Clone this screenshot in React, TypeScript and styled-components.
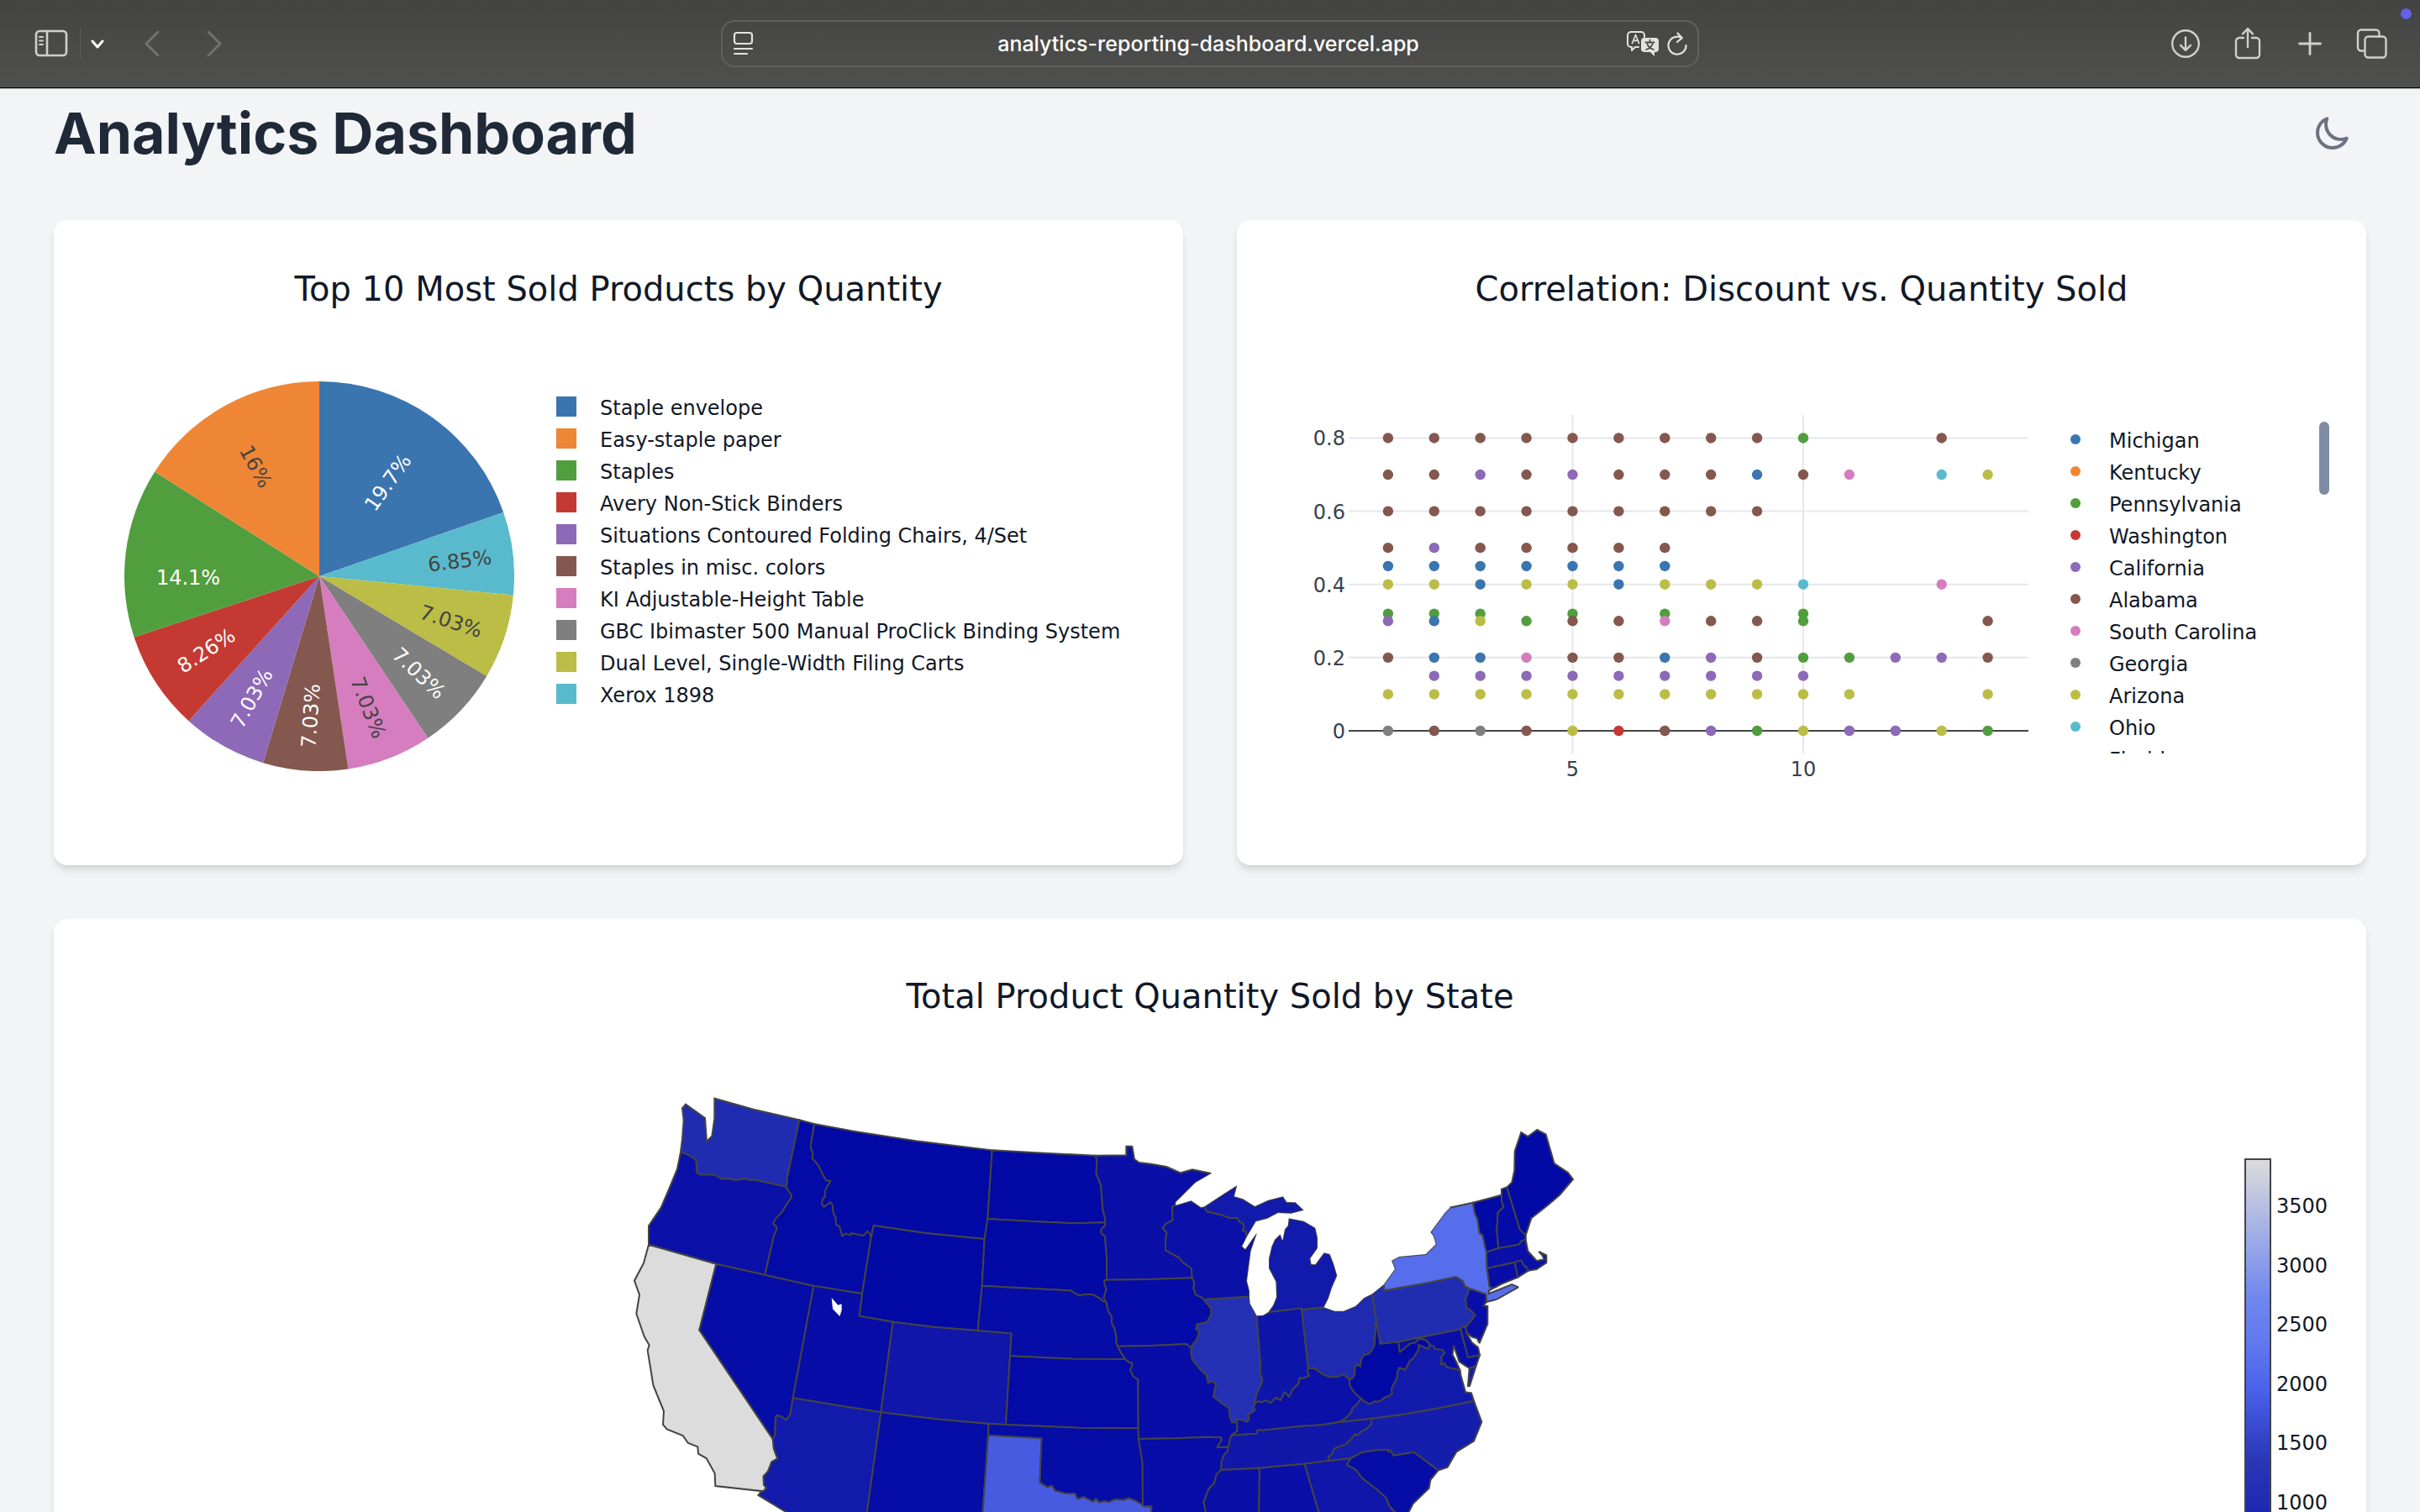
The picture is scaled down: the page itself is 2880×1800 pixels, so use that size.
import React from "react";
import styled, { createGlobalStyle } from "styled-components";

const CHART_FONT = '"DejaVu Sans", Verdana, sans-serif';
const UI_FONT = 'Inter, "Liberation Sans", sans-serif';

const COLORS = {
  blue: "#3b75af",
  orange: "#ef8636",
  green: "#519e3e",
  red: "#c43a32",
  purple: "#8d69b8",
  brown: "#84584e",
  pink: "#d57dbe",
  gray: "#7f7f7f",
  olive: "#bbbd46",
  cyan: "#58bacc",
};

const GlobalStyle = createGlobalStyle`
  *, *::before, *::after { box-sizing: border-box; }
  body { margin: 0; background: #f3f4f6; font-family: ${UI_FONT}; }
  h1, h2, ul { margin: 0; padding: 0; }
  ul { list-style: none; }
  svg { display: block; flex: none; }
`;

/* ---------- Browser window ---------- */

const Window = styled.div`
  display: flex;
  flex-direction: column;
  height: 100vh;
  overflow: hidden;
  background: #f3f4f6;
`;

const Toolbar = styled.div`
  position: relative;
  display: grid;
  grid-template-columns: 1fr minmax(0, 1164px) 1fr;
  align-items: center;
  flex: none;
  height: 106px;
  padding-bottom: 2px;
  background: linear-gradient(#434341, #50504e);
  border-bottom: 1px solid #b4b4b4;
  box-shadow: inset 0 -1px 0 #000;
`;

const ToolGroup = styled.div<{ $end?: boolean }>`
  display: flex;
  align-items: center;
  justify-content: ${(p) => (p.$end ? "flex-end" : "flex-start")};
  gap: ${(p) => (p.$end ? "32px" : "0")};
  padding: 0 36px 0 32px;
`;

const IconButton = styled.button<{ $w?: number; $color?: string }>`
  display: flex;
  align-items: center;
  justify-content: center;
  width: ${(p) => p.$w ?? 42}px;
  height: 48px;
  padding: 0;
  border: 0;
  background: none;
  color: ${(p) => p.$color ?? "#cfcfcd"};
  cursor: pointer;
`;

const Divider = styled.span`
  width: 1px;
  height: 36px;
  margin: 0 8px 0 5px;
  background: #60605e;
`;

const NavButtons = styled.div`
  display: flex;
  gap: 32px;
  margin-left: 32px;
`;

const AddressBar = styled.label`
  display: flex;
  align-items: center;
  height: 56px;
  padding: 0 4px 0 12px;
  border: 2px solid #5f5f5d;
  border-radius: 16px;
  color: #e2e2e0;
`;

const AddressInput = styled.input`
  flex: 1;
  min-width: 0;
  margin-left: 44px;
  padding: 0;
  border: 0;
  outline: 0;
  background: none;
  color: #fff;
  font: 500 25px/32px ${UI_FONT};
  text-align: center;
`;

const RecordingDot = styled.span`
  position: absolute;
  top: 10px;
  right: 10px;
  width: 13px;
  height: 13px;
  border-radius: 50%;
  background: #6462e8;
`;

/* ---------- Page ---------- */

const Page = styled.main`
  display: flex;
  flex-direction: column;
  gap: 64px;
  flex: 1;
  min-height: 0;
  overflow: hidden;
  padding: 12px 64px 0;
`;

const PageHeader = styled.header`
  display: flex;
  flex: none;
  align-items: center;
  justify-content: space-between;
`;

const PageTitle = styled.h1`
  color: #1f2937;
  font: 700 68px/80px ${UI_FONT};
`;

const ThemeButton = styled.button`
  display: flex;
  padding: 16px;
  border: 0;
  background: none;
  color: #6b7280;
  cursor: pointer;
`;

const CardRow = styled.div`
  display: grid;
  flex: none;
  grid-template-columns: 1fr 1fr;
  gap: 64px;
`;

const Card = styled.section<{ $tall?: boolean }>`
  flex: none;
  min-height: ${(p) => (p.$tall ? 1000 : 768)}px;
  padding: ${(p) => (p.$tall ? 68 : 58)}px 32px 32px;
  border-radius: 16px;
  background: #fff;
  box-shadow: 0 8px 12px -2px rgba(0, 0, 0, 0.1), 0 4px 8px -4px rgba(0, 0, 0, 0.1);
`;

const CardTitle = styled.h2`
  color: #111827;
  font: 400 40px/48px ${CHART_FONT};
  text-align: center;
`;

const PieBody = styled.div`
  display: flex;
  gap: 50px;
  padding: 86px 0 0 52px;
`;

const ScatterBody = styled.div`
  display: flex;
  align-items: flex-start;
  gap: 40px;
  padding: 112px 12px 0 40px;
`;

const MapBody = styled.div`
  display: flex;
  align-items: flex-start;
  padding-top: 70px;
`;

const MapArea = styled.div`
  display: flex;
  flex: 1;
  justify-content: center;
`;

const ColorBarArea = styled.div`
  display: flex;
  justify-content: flex-end;
  width: 260px;
  padding-top: 99px;
`;

const Legend = styled.ul<{ $scroll?: boolean }>`
  flex: 1;
  min-width: 0;
  height: ${(p) => (p.$scroll ? "417px" : "auto")};
  padding-top: ${(p) => (p.$scroll ? 24 : 11)}px;
  overflow: hidden;
  color: #111827;
  font: 400 24px/32px ${CHART_FONT};
`;

const LegendItem = styled.li<{ $gap: number }>`
  display: flex;
  align-items: center;
  gap: ${(p) => p.$gap}px;
  height: 38px;
  white-space: nowrap;
`;

const LegendName = styled.span`
  padding-top: 3px;
`;

const Swatch = styled.span<{ $color: string; $round?: boolean }>`
  flex: none;
  width: ${(p) => (p.$round ? 12 : 24)}px;
  height: ${(p) => (p.$round ? 12 : 24)}px;
  border-radius: ${(p) => (p.$round ? "50%" : "0")};
  background: ${(p) => p.$color};
`;

const ScrollThumb = styled.div`
  flex: none;
  width: 12px;
  height: 87px;
  margin-top: 22px;
  border-radius: 6px;
  background: #808ba4;
`;

const ChartText = styled.text<{ $fill: string }>`
  font: 400 24px ${CHART_FONT};
  fill: ${(p) => p.$fill};
`;

/* ---------- Toolbar icons ---------- */

const stroke = {
  fill: "none",
  stroke: "currentColor",
  strokeLinecap: "round" as const,
  strokeLinejoin: "round" as const,
};

const SidebarIcon = () => (
  <svg width="40" height="34" viewBox="0 0 40 34" {...stroke} strokeWidth="2.6">
    <rect x="2" y="2" width="36" height="29" rx="4" />
    <path d="M15 2v29" />
    <path d="M6 9h4M6 13.5h4M6 18h4" strokeWidth="2" />
  </svg>
);

const ChevronIcon = ({ d, w, h, sw }: { d: string; w: number; h: number; sw: number }) => (
  <svg width={w} height={h} viewBox={`0 0 ${w} ${h}`} {...stroke} strokeWidth={sw}>
    <path d={d} />
  </svg>
);

const ReaderIcon = () => (
  <svg width="26" height="30" viewBox="0 0 26 30" {...stroke} strokeWidth="2.2">
    <rect x="2" y="2" width="21" height="13" rx="3" />
    <path d="M2 21h21M2 27h15" />
  </svg>
);

const TranslateIcon = () => (
  <svg width="40" height="32" viewBox="0 0 40 32" {...stroke} strokeWidth="2">
    <path d="M15 20h-4l-4 4v-4H6a4 4 0 0 1-4-4V6a4 4 0 0 1 4-4h12a4 4 0 0 1 4 4v2" />
    <path d="M7.5 15.5 11.5 5.5l4 10M9 12.3h5" strokeWidth="1.7" />
    <path
      d="M22 9h13a4 4 0 0 1 4 4v9a4 4 0 0 1-4 4h-1v5l-5-5h-7a4 4 0 0 1-4-4v-9a4 4 0 0 1 4-4z"
      fill="currentColor"
      stroke="none"
    />
    <path
      d="M28.5 11.500v2.500M23.500 14.500h10M25.500 16.500c1 3 4 5.500 7.500 6.500M31.500 16.500c-1 3-4 5.500-7.500 6.500"
      stroke="#494946"
      strokeWidth="1.8"
    />
  </svg>
);

const ReloadIcon = () => (
  <svg width="26" height="30" viewBox="0 0 26 30" {...stroke} strokeWidth="2.2">
    <path d="M18.5 8.2A10.500 10.500 0 1 0 23.500 17" />
    <path d="M13.500 2.500 18.700 8.200 13 13" />
  </svg>
);

const DownloadIcon = () => (
  <svg width="36" height="36" viewBox="0 0 36 36" {...stroke} strokeWidth="2.4">
    <circle cx="18" cy="18" r="15.8" />
    <path d="M18 10.500v15M12 19.800l6 6 6-6" />
  </svg>
);

const ShareIcon = () => (
  <svg width="32" height="40" viewBox="0 0 32 40" {...stroke} strokeWidth="2.4">
    <path d="M11 13H6a4 4 0 0 0-4 4v16a4 4 0 0 0 4 4h20a4 4 0 0 0 4-4V17a4 4 0 0 0-4-4h-5" />
    <path d="M16 24V2.500M10 8.300 16 2.200l6 6.100" />
  </svg>
);

const PlusIcon = () => (
  <svg width="30" height="30" viewBox="0 0 30 30" {...stroke} strokeWidth="2.8">
    <path d="M15 2.500v25M2.500 15h25" />
  </svg>
);

const TabsIcon = () => (
  <svg width="38" height="38" viewBox="0 0 38 38" {...stroke} strokeWidth="2.4">
    <rect x="10.5" y="10.5" width="25" height="25" rx="4" />
    <path d="M9 27.500H6a4 4 0 0 1-4-4V6.500a4 4 0 0 1 4-4h17.500a4 4 0 0 1 4 4V9" />
  </svg>
);

const MoonIcon = () => (
  <svg width="48" height="48" viewBox="0 0 24 24" {...stroke} strokeWidth="2">
    <path d="M20.354 15.354A9 9 0 0 1 8.646 3.646 9.003 9.003 0 0 0 12 21a9.003 9.003 0 0 0 8.354-5.646z" />
  </svg>
);

/* ---------- Pie chart ---------- */

const PRODUCTS: [string, string][] = [
  ["Staple envelope", COLORS.blue],
  ["Easy-staple paper", COLORS.orange],
  ["Staples", COLORS.green],
  ["Avery Non-Stick Binders", COLORS.red],
  ["Situations Contoured Folding Chairs, 4/Set", COLORS.purple],
  ["Staples in misc. colors", COLORS.brown],
  ["KI Adjustable-Height Table", COLORS.pink],
  ["GBC Ibimaster 500 Manual ProClick Binding System", COLORS.gray],
  ["Dual Level, Single-Width Filing Carts", COLORS.olive],
  ["Xerox 1898", COLORS.cyan],
];

// Quantity, slice colour, label, label centre from the middle of the pie, turn, label colour
type Slice = [number, string, string, number, number, number, string];
const SLICES: Slice[] = [
  [112, COLORS.blue, "19.7%", 81, -112, -54.6, "#fff"],
  [39, COLORS.cyan, "6.85%", 167, -19, -6.8, "#444"],
  [40, COLORS.olive, "7.03%", 157, 53, 18.2, "#444"],
  [40, COLORS.gray, "7.03%", 119, 115, 43.5, "#fff"],
  [40, COLORS.pink, "7.03%", 59, 156, 68.8, "#444"],
  [40, COLORS.brown, "7.03%", -11, 166, -85.9, "#fff"],
  [40, COLORS.purple, "7.03%", -81, 145, -60.6, "#fff"],
  [47, COLORS.red, "8.26%", -135, 88, -33.1, "#fff"],
  [80, COLORS.green, "14.1%", -156, 1, 0, "#fff"],
  [91, COLORS.orange, "16%", -75, -131, 61.2, "#444"],
];
const R = 232;

const Pie = () => {
  const total = SLICES.reduce((s, x) => s + x[0], 0);
  let from = 0;
  const at = (q: number) => {
    const a = (q / total) * Math.PI * 2;
    return `${(Math.sin(a) * R).toFixed(2)},${(-Math.cos(a) * R).toFixed(2)}`;
  };
  return (
    <svg width={2 * R} height={2 * R} viewBox={`${-R} ${-R} ${2 * R} ${2 * R}`} role="img" aria-label="Pie chart">
      {SLICES.map(([q, color], i) => {
        const d = `M0,0L${at(from)}A${R},${R} 0 0 1 ${at(from + q)}Z`;
        from += q;
        return <path key={i} d={d} fill={color} />;
      })}
      {SLICES.map(([, , label, x, y, turn, fill], i) => (
        <ChartText key={i} $fill={fill} textAnchor="middle" transform={`translate(${x} ${y}) rotate(${turn})`} dy="9">
          {label}
        </ChartText>
      ))}
    </svg>
  );
};

/* ---------- Scatter chart ---------- */

const KEY: Record<string, string> = {
  B: COLORS.brown,
  U: COLORS.blue,
  G: COLORS.green,
  P: COLORS.purple,
  O: COLORS.olive,
  C: COLORS.cyan,
  K: COLORS.pink,
  Y: COLORS.gray,
  R: COLORS.red,
};

// One letter for each quantity from 1 on; a dot where there is no sale
const POINTS: [number, string][] = [
  [0.8, "BBBBBBBBBG..B"],
  [0.7, "BBPBPBBBUBK.CO"],
  [0.6, "BBBBBBBBB"],
  [0.5, "BPBBBBB"],
  [0.45, "UUUUUUU"],
  [0.4, "OOUOOUOOOC..K"],
  [0.32, "GGG.G.G..G"],
  [0.3, "PUOGBBKBBG...B"],
  [0.2, "BUUKBBUPBGGPPB"],
  [0.15, ".PPPPPPPPP"],
  [0.1, "OOOOOOOOOOO..O"],
  [0, "YBYBORBPGOPPOG"],
];

const STATES_LEGEND: [string, string][] = [
  ["Michigan", COLORS.blue],
  ["Kentucky", COLORS.orange],
  ["Pennsylvania", COLORS.green],
  ["Washington", COLORS.red],
  ["California", COLORS.purple],
  ["Alabama", COLORS.brown],
  ["South Carolina", COLORS.pink],
  ["Georgia", COLORS.gray],
  ["Arizona", COLORS.olive],
  ["Ohio", COLORS.cyan],
  ["Florida", COLORS.blue],
];

const sx = (v: number) => 53 + v * 54.9;
const sy = (v: number) => 390 - v * 435.7;

const Scatter = () => (
  <svg width="880" height="456" viewBox="0 0 880 456" role="img" aria-label="Scatter chart">
    {[5, 10].map((v) => (
      <g key={v}>
        <path d={`M${sx(v)},14V417`} stroke="#e5e7eb" strokeWidth="2" />
        <ChartText $fill="#374151" x={sx(v)} y="444" textAnchor="middle">
          {v}
        </ChartText>
      </g>
    ))}
    {[0.8, 0.6, 0.4, 0.2, 0].map((v) => (
      <g key={v}>
        <path d={`M61,${sy(v)}H870`} stroke={v ? "#e5e7eb" : "#444"} strokeWidth="2" />
        <ChartText $fill="#374151" x="57" y={sy(v) + 9} textAnchor="end">
          {v}
        </ChartText>
      </g>
    ))}
    {POINTS.map(([y, row]) =>
      row.split("").map((c, i) => (c === "." ? null : <circle key={`${y}-${i}`} cx={sx(i + 1)} cy={sy(y)} r="6.2" fill={KEY[c]} />))
    )}
  </svg>
);

/* ---------- Map ---------- */

// Border lines that neighbouring states share. W, M and E are the west, middle
// and east sheets of the map, each with its own origin.
const ORIGIN: Record<string, [number, number]> = { W: [0, 0], M: [1260, 0], E: [1950, 120] };

const ARCS: Record<string, string> = {
  waCoast: "W 240,275 246,228 251,160 246,118 258,104 327,153 333,237 352,217 361,155 361,83",
  can1: "W 361,83 500,122 664,160",
  waId: "W 664,160 620,370 621,384 617,398",
  waOr: "W 617,398 506,374 485,374 469,369 436,375 411,369 388,371 367,359 350,355 324,356 310,355 297,348 296,308 290,300 268,285 240,275",
  orCoast: "W 126,605 126,538 170,473 198,408 228,335 240,275",
  orId: "W 617,398 625,414 636,428 635,438 622,456 602,489 583,508 573,522 572,532 582,540 583,550 573,573 541,713",
  orNv: "W 541,713 367,674",
  orCa: "W 367,674 126,605",
  caCoast: "W 535,1486 364,1467 362,1422 332,1368 303,1352 301,1327 266,1313 248,1287 191,1264 177,1248 180,1200 142,1107 133,1050 122,983 128,964 110,933 82,852 93,784 75,734 108,671 126,605",
  caNv: "W 367,674 307,910 569,1299",
  caAz: "W 569,1299 573,1335 586,1369 565,1381 552,1415 536,1432 537,1462 546,1474 535,1486",
  nvId: "W 541,713 715,752",
  nvUt: "W 715,752 641,1153",
  nvAz: "W 641,1153 631,1213 616,1231 600,1219 584,1215 579,1223 577,1285 569,1299",
  idMt: "W 717,174 704,256 712,280 710,296 731,321 752,363 760,375 775,378 756,412 755,436 748,440 744,460 752,470 774,453 782,462 786,495 794,509 795,533 808,541 817,574 831,565 846,571 850,564 893,573 907,557 915,565 920,580",
  can2: "W 664,160 717,174",
  idWy: "W 920,580 888,780",
  idUt: "W 888,780 715,752",
  can3: "W 717,174 850,199 1080,235 1352,268",
  mtNd: "W 1352,268 1336,513",
  mtSd: "W 1336,513 1325,585",
  mtWy: "W 1325,585 1120,565 929,537 920,580",
  wySd: "W 1325,585 1316,752",
  wyNe: "W 1316,752 1301,912",
  wyCo: "W 1301,912 1150,900 998,881",
  wyUt: "W 998,881 878,860 888,780",
  utCo: "W 998,881 955,1204",
  utAz: "W 955,1204 641,1153",
  coNe: "W 1301,912 1421,922 1416,1003",
  coKs: "W 1416,1003 1401,1248",
  coOk: "W 1401,1248 1339,1245",
  coNm: "W 1339,1245 1150,1228 955,1204",
  azNm: "W 955,1204 900,1600",
  azSouth: "W 900,1600 690,1600 616,1560 517,1500 527,1488 535,1486",
  nmOk: "W 1339,1245 1338,1286",
  nmTx: "W 1338,1286 1316,1600",
  can4: "M 92,268 250,277 461,287",
  ndMn: "M 461,287 466,302 464,352 480,392 487,478 496,515 496,526",
  ndSd: "M 496,526 390,529 250,523 76,513",
  sdMn: "M 496,526 495,539 485,545 480,558 485,568 495,575 501,650 501,731",
  sdIa: "M 501,731 493,732 493,745 500,763 491,795 500,812",
  sdNe: "M 500,812 485,806 480,799 451,783 417,783 409,787 392,782 373,769 250,763 56,752",
  neIa: "M 500,812 507,843 519,862 520,887 529,903 536,935 535,955 541,968",
  neMo: "M 541,968 545,978 567,1014",
  neKs: "M 567,1014 380,1013 156,1003",
  ksMo: "M 567,1014 583,1026 592,1027 592,1037 585,1052 598,1078 613,1086 614,1261",
  ksOk: "M 614,1261 400,1259 141,1248",
  okMo: "M 614,1261 615,1299",
  okAr: "M 615,1299 629,1385 630,1535",
  okTx: "M 630,1535 602,1519 580,1511 564,1517 530,1515 509,1525 494,1522 473,1526 463,1513 453,1524 418,1506 397,1514 388,1495 355,1494 317,1484 305,1466 289,1471 262,1454 268,1297 78,1286",
  txAr: "M 630,1535 633,1540 661,1539 660,1600",
  arMo: "M 615,1299 750,1297 858,1292 907,1293 912,1302 895,1330 935,1328",
  arTn: "M 935,1328 933,1343 921,1355 911,1380 910,1410",
  arMs: "M 910,1410 893,1425 885,1457 866,1477 847,1525 855,1560 870,1600",
  moTn: "M 935,1328 946,1286",
  moKy: "M 946,1286 968,1270 966,1239",
  moIl: "M 966,1239 948,1240 941,1220 938,1190 905,1166 882,1148 891,1105 880,1093 863,1098 857,1070 830,1045 807,1015 802,990 805,975",
  moIa: "M 805,975 800,973 786,960 660,966 541,968",
  iaIl: "M 805,975 807,963 821,948 831,922 827,910 820,906 824,890 860,881 874,856 875,834 848,801",
  iaWi: "M 848,801 838,792 819,784 811,760 814,741 806,724",
  iaMn: "M 806,724 650,729 501,731",
  mnWi: "M 806,724 804,690 775,670 757,650 738,640 711,625 711,590 716,562 702,547 710,533 737,517 735,470 748,464",
  can5: "M 461,287 571,286 571,254 592,254 600,300 617,312 660,317 715,327 765,349 807,337 875,351",
  mnSup: "M 875,351 818,384 748,454 748,464",
  wiSup: "M 748,464 803,448 838,472 850,469",
  wiMi: "M 850,469 859,487 905,497 940,510 968,509 974,522 988,529 991,540 987,555 998,559 1002,577",
  wiLake: "M 1002,577 985,611 996,621 1030,572 1038,564 1016,628 1002,735 1011,770 1011,791",
  ilWi: "M 1011,791 848,801",
  miUp: "M 850,469 920,423 967,393 957,433 988,442 1030,468 1078,446 1131,433 1144,453 1175,454 1205,482 1160,494 1113,492 1075,512 1034,523 1002,577",
  ilLake: "M 1011,791 1013,815 1037,859",
  ilIn: "M 1037,859 1051,1042 1048,1063 1057,1085 1056,1097 1038,1134 1030,1165 1031,1172",
  ilKy: "M 1031,1172 1026,1187 1030,1197 1006,1213 1010,1229 1003,1238 975,1229 966,1230 966,1239",
  inLake: "M 1037,859 1060,857 1078,846",
  inMi: "M 1078,846 1197,832",
  inOh: "M 1197,832 1221,1047",
  inKy: "M 1221,1047 1218,1055 1224,1073 1203,1083 1190,1082 1187,1100 1165,1123 1153,1148 1136,1132 1122,1161 1105,1152 1087,1170 1068,1161 1053,1168 1040,1165 1031,1172",
  miLow: "M 1078,846 1095,822 1107,793 1105,738 1080,690 1080,655 1090,612 1101,587 1121,568 1129,590 1137,550 1148,538 1151,511 1205,521 1246,545 1254,580 1254,618 1228,655 1232,675 1246,676 1277,634 1298,639 1312,675 1324,716 1305,760 1293,797 1277,829",
  miOh: "M 1277,829 1197,838 1197,832",
  ohErie: "M 1277,829 1315,842 1347,842 1390,824 1420,795 1449,781",
  ohPa: "M 1449,781 1465,885",
  ohWv: "M 1465,885 1458,890 1462,900 1457,965 1447,985 1436,996 1418,1000 1410,1017 1407,1040 1395,1033 1388,1043 1387,1065 1380,1082 1368,1086",
  ohKy: "M 1368,1086 1358,1080 1347,1069 1322,1078 1296,1078 1272,1068 1243,1047 1221,1047",
  kyWv: "M 1368,1086 1370,1110 1385,1133 1410,1155",
  kyVa: "M 1410,1155 1395,1175 1378,1190 1375,1203 1355,1225 1330,1239",
  kyTn: "M 1330,1239 1270,1249 1190,1254 1052,1269 1047,1265 1038,1270 1038,1280 946,1286",
  vaTn: "M 1330,1239 1445,1226",
  tnNc: "M 1445,1226 1447,1245 1440,1252 1428,1265 1415,1270 1395,1287 1387,1282 1377,1297 1355,1318 1315,1333 1303,1357 1293,1362 1292,1377",
  tnGa: "M 1292,1377 1208,1388",
  tnAl: "M 1208,1388 1045,1403",
  tnMs: "M 1045,1403 910,1410",
  msAl: "M 1045,1403 1047,1420 1044,1600",
  alGa: "M 1208,1388 1270,1600",
  gaNc: "M 1292,1377 1372,1368",
  gaSc: "M 1372,1368 1358,1392 1390,1408 1415,1440 1470,1483 1500,1510 1510,1538 1530,1560 1560,1600",
  ncSc: "E 682,1248 725,1226 775,1219 815,1217 818,1225 824,1219 835,1238 908,1226 995,1291",
  scCoast: "E 995,1291 967,1326 962,1355 905,1410 870,1480",
  vaNc: "E 755,1106 865,1092 990,1070 1122,1043",
  ncCoast: "E 1122,1043 1150,1118 1122,1187 1060,1225 1028,1280 995,1291",
  vaWv: "E 720,1035 732,1046 748,1055 770,1044 778,1047 800,1037 800,1032 822,1025 831,1015 828,1000 835,985 847,965 850,940 857,925 877,933 895,897 902,896 925,860 926,844 960,858",
  wvMd: "E 960,858 965,840 950,825 928,820 912,835 895,838 880,850 857,870 853,832",
  wvPa: "E 853,832 788,839 775,765",
  vaMd: "E 960,858 965,843 980,848 982,857 1012,862 1018,873 1006,885 1008,900 1003,913 1018,909 1025,922 1073,934",
  vaBay: "E 1073,934 1075,950 1092,1012 1113,1015 1122,1043",
  mdBay: "E 1073,934 1060,905 1046,878 1050,845 1070,903 1106,927",
  mdShore: "E 1106,927 1130,918 1143,880",
  mdDe: "E 1143,880 1101,887 1075,787",
  mdPa: "E 1075,787 853,832",
  paDe: "E 1075,787 1082,775 1092,780",
  deCoast: "E 1092,780 1096,800 1115,835 1137,852 1143,880",
  paNj: "E 1092,780 1110,760 1127,737 1112,720 1096,709 1092,680 1100,660 1107,642",
  paNy: "E 1107,642 1090,634 1082,615 1058,600 940,625 803,649 800,628",
  paErie: "E 800,628 759,661",
  nyNj: "E 1107,642 1166,662",
  njCoast: "E 1166,662 1167,690 1155,703 1171,705 1171,768 1142,837 1133,820 1115,815 1098,800 1092,780",
  nyLake: "E 800,628 840,572 828,542 855,528 950,519 986,484 978,455 967,441 1018,372 1036,353",
  can6: "E 1036,353 1119,335",
  nyVt: "E 1119,335 1125,370 1135,395 1143,445 1153,450 1167,512",
  nyMa: "E 1167,512 1169,570",
  nyCt: "E 1169,570 1178,635 1188,640 1175,650",
  nyLi: "E 1175,650 1176,660 1258,627 1281,637 1205,680 1167,690 1166,662",
  vtTop: "E 1119,335 1221,308",
  vtNh: "E 1221,308 1221,328 1228,350 1208,370 1204,435 1210,498",
  vtMa: "E 1210,498 1167,512",
  nhTop: "E 1221,308 1221,287 1240,280",
  nhMe: "E 1240,280 1286,430 1307,452",
  nhCoast: "E 1307,452 1307,467",
  nhMa: "E 1307,467 1292,472 1283,485 1210,498",
  meCoast: "E 1240,280 1258,262 1267,220 1268,152 1291,84 1315,99 1348,75 1379,91 1409,195 1458,228 1476,252 1428,308 1385,345 1327,391 1307,452",
  maCoast: "E 1307,467 1315,508 1346,543 1373,538 1366,523 1354,510 1381,523 1381,550 1346,573 1317,578",
  maRi: "E 1317,578 1308,565 1300,560 1291,541 1268,548",
  maCt: "E 1268,548 1169,570",
  riCt: "E 1268,548 1279,602",
  riCoast: "E 1317,578 1279,602",
  ctCoast: "E 1279,602 1222,625 1175,650",
  vaShore: "E 1106,927 1130,918 1107,990 1101,990",
  openWater: "E 1036,353 1000,80 185,80 185,231",
};

// State, fill, and its ring of border lines (a minus sign runs a line backwards)
const STATES: [string, string, string][] = [
  ["WA", "#202cb0", "waCoast can1 waId waOr"],
  ["OR", "#0a10a8", "orCoast -waOr orId orNv orCa"],
  ["CA", "#dcdcdc", "-orCa caNv caAz caCoast"],
  ["NV", "#060ca6", "-orNv nvId nvUt nvAz -caNv"],
  ["ID", "#040aa5", "can2 idMt idWy idUt -nvId -orId -waId"],
  ["MT", "#0309a4", "can3 mtNd mtSd mtWy -idMt"],
  ["WY", "#0309a4", "-mtWy wySd wyNe wyCo wyUt -idWy"],
  ["UT", "#070da6", "-idUt -wyUt utCo utAz -nvUt"],
  ["CO", "#0f16a9", "-wyCo coNe coKs coOk coNm -utCo"],
  ["AZ", "#121aab", "-utAz azNm azSouth -caAz -nvAz"],
  ["NM", "#060ca6", "-coNm nmOk nmTx -azNm"],
  ["ND", "#0309a4", "can4 ndMn ndSd -mtNd"],
  ["SD", "#0309a4", "-ndSd sdMn sdIa sdNe -wySd -mtSd"],
  ["NE", "#060ca6", "-sdNe neIa neMo neKs -coNe -wyNe"],
  ["KS", "#040aa5", "-neKs ksMo ksOk -coKs"],
  ["OK", "#060ca6", "-ksOk okMo okAr okTx -nmOk -coOk"],
  ["TX", "#475be1", "-okTx txAr -nmTx"],
  ["MN", "#090fa7", "can5 mnSup -mnWi iaMn -sdMn -ndMn"],
  ["IA", "#050ba6", "iaIl iaWi iaMn sdIa neIa -moIa"],
  ["MO", "#070da6", "moIa neMo ksMo okMo arMo moTn moKy moIl"],
  ["AR", "#070da6", "arMo arTn arMs -txAr -okAr"],
  ["WI", "#0b11a8", "wiSup wiMi wiLake ilWi iaWi mnWi"],
  ["MI-N", "#111aab", "miUp -wiMi"],
  ["IL", "#2531b4", "-ilWi ilLake ilIn ilKy moIl iaIl"],
  ["IN", "#0e15a9", "inLake inMi inOh inKy -ilIn"],
  ["MI", "#111aab", "miLow miOh -inMi"],
  ["OH", "#1e2aaf", "-miOh ohErie ohPa ohWv ohKy -inOh"],
  ["KY", "#0a10a8", "-inKy -ohKy kyWv kyVa kyTn moKy -ilKy"],
  ["TN", "#1017a9", "-kyTn vaTn tnNc tnGa tnAl tnMs -arTn moTn"],
  ["MS", "#090fa7", "-tnMs msAl -arMs"],
  ["AL", "#090fa7", "-tnAl alGa -msAl"],
  ["GA", "#0f16a9", "-tnGa gaNc gaSc -alGa"],
  ["SC", "#060ca6", "ncSc scCoast -gaSc"],
  ["NC", "#151dac", "vaNc ncCoast -ncSc -gaNc -tnNc"],
  ["WV", "#0309a4", "vaWv wvMd wvPa ohWv kyWv"],
  ["VA", "#121aab", "-kyVa vaWv vaMd vaBay -vaNc -vaTn"],
  ["VA-E", "#121aab", "vaShore"],
  ["MD", "#080ea7", "wvMd -mdPa -mdDe -mdShore -mdBay -vaMd"],
  ["DE", "#080ea7", "mdDe paDe deCoast"],
  ["PA", "#212db1", "ohPa -wvPa -mdPa paDe paNj paNy paErie"],
  ["NJ", "#080ea7", "nyNj njCoast paNj"],
  ["NY", "#566dec", "nyLake can6 nyVt nyMa nyCt nyLi -nyNj paNy"],
  ["VT", "#0309a4", "vtTop vtNh vtMa -nyVt"],
  ["NH", "#050ba6", "nhTop nhMe nhCoast nhMa -vtNh"],
  ["ME", "#0309a4", "meCoast -nhMe"],
  ["MA", "#090fa7", "maCoast maRi maCt -nyMa -vtMa -nhMa"],
  ["CT", "#070da6", "-maCt riCt ctCoast -nyCt"],
  ["RI", "#060ca6", "-maRi riCoast -riCt"],
];

const arcPoints = (ref: string) => {
  const back = ref.startsWith("-");
  const [sheet, ...pts] = ARCS[back ? ref.slice(1) : ref].split(" ");
  const [ox, oy] = ORIGIN[sheet];
  const out = pts.map((p) => {
    const [x, y] = p.split(",").map(Number);
    return `${x + ox},${y + oy}`;
  });
  return back ? out.reverse() : out;
};

const ringPath = (refs: string) => `M${refs.split(" ").flatMap(arcPoints).join("L")}Z`;

const UsMap = () => (
  <svg width="1160" height="560" viewBox="0 0 3480 1680" role="img" aria-label="Map of product quantity sold by state">
    <g stroke="#444" strokeWidth="6" strokeLinejoin="miter" strokeMiterlimit="2">
      {STATES.map(([id, fill, refs]) => (
        <path key={id} d={ringPath(refs)} fill={fill} />
      ))}
    </g>
    <path d={ringPath("wiLake ilLake inLake miLow ohErie -paErie nyLake openWater mnSup wiSup miUp")} fill="#fff" />
    <path d="M779,795L802,821L815,817L815,840L808,861L783,835Z" fill="#fff" />
  </svg>
);

const COLOR_STOPS: [number, string][] = [
  [0, "#dcdcdc"],
  [0.3, "#6f87ee"],
  [0.4, "#6078ee"],
  [0.5, "#4a61eb"],
  [0.65, "#2937b6"],
  [1, "#0309a4"],
];

const ColorBar = () => (
  <svg width="116" height="560" viewBox="0 0 116 560" role="img" aria-label="Colour scale">
    <defs>
      <linearGradient id="scale" x1="0" y1="0" x2="0" y2="1">
        {COLOR_STOPS.map(([o, c]) => (
          <stop key={o} offset={o} stopColor={c} />
        ))}
      </linearGradient>
    </defs>
    <rect x="4" y="1" width="30" height="550" fill="url(#scale)" stroke="#444" strokeWidth="2" />
    {[3500, 3000, 2500, 2000, 1500, 1000].map((v) => (
      <ChartText key={v} $fill="#111827" x="41" y={65 + (3500 - v) * 0.141}>
        {v}
      </ChartText>
    ))}
  </svg>
);

/* ---------- App ---------- */

export default function App() {
  return (
    <Window>
      <GlobalStyle />
      <Toolbar>
        <ToolGroup>
          <IconButton $w={58} aria-label="Sidebar">
            <SidebarIcon />
          </IconButton>
          <Divider />
          <IconButton $w={24} $color="#fff" aria-label="Tab groups">
            <ChevronIcon d="M3 4l6 7 6-7" w={18} h={14} sw={3} />
          </IconButton>
          <NavButtons>
            <IconButton $color="#71716f" aria-label="Back">
              <ChevronIcon d="M17 2L3 16l14 14" w={20} h={32} sw={3} />
            </IconButton>
            <IconButton $color="#71716f" aria-label="Forward">
              <ChevronIcon d="M3 2l14 14L3 30" w={20} h={32} sw={3} />
            </IconButton>
          </NavButtons>
        </ToolGroup>
        <AddressBar aria-label="Address">
          <ReaderIcon />
          <AddressInput type="text" defaultValue="analytics-reporting-dashboard.vercel.app" aria-label="Address" />
          <IconButton $w={42} $color="#e2e2e0" aria-label="Translate">
            <TranslateIcon />
          </IconButton>
          <IconButton $w={40} $color="#e2e2e0" aria-label="Reload">
            <ReloadIcon />
          </IconButton>
        </AddressBar>
        <ToolGroup $end>
          <IconButton aria-label="Downloads">
            <DownloadIcon />
          </IconButton>
          <IconButton aria-label="Share">
            <ShareIcon />
          </IconButton>
          <IconButton aria-label="New tab">
            <PlusIcon />
          </IconButton>
          <IconButton aria-label="Tab overview">
            <TabsIcon />
          </IconButton>
        </ToolGroup>
        <RecordingDot />
      </Toolbar>

      <Page>
        <PageHeader>
          <PageTitle>Analytics Dashboard</PageTitle>
          <ThemeButton aria-label="Dark mode">
            <MoonIcon />
          </ThemeButton>
        </PageHeader>

        <CardRow>
          <Card>
            <CardTitle>Top 10 Most Sold Products by Quantity</CardTitle>
            <PieBody>
              <Pie />
              <Legend>
                {PRODUCTS.map(([name, color]) => (
                  <LegendItem key={name} $gap={28}>
                    <Swatch $color={color} />
                    <LegendName>{name}</LegendName>
                  </LegendItem>
                ))}
              </Legend>
            </PieBody>
          </Card>
          <Card>
            <CardTitle>Correlation: Discount vs. Quantity Sold</CardTitle>
            <ScatterBody>
              <Scatter />
              <Legend $scroll>
                {STATES_LEGEND.map(([name, color]) => (
                  <LegendItem key={name} $gap={34}>
                    <Swatch $color={color} $round />
                    <LegendName>{name}</LegendName>
                  </LegendItem>
                ))}
              </Legend>
              <ScrollThumb />
            </ScatterBody>
          </Card>
        </CardRow>

        <Card $tall>
          <CardTitle>Total Product Quantity Sold by State</CardTitle>
          <MapBody>
            <MapArea>
              <UsMap />
            </MapArea>
            <ColorBarArea>
              <ColorBar />
            </ColorBarArea>
          </MapBody>
        </Card>
      </Page>
    </Window>
  );
}
